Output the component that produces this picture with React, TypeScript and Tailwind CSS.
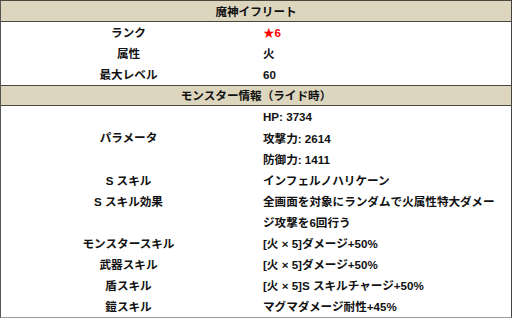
import React from 'react';

type Row = { label: string; value: React.ReactNode };

const basicRows: Row[] = [
    { label: 'ランク', value: <span className="text-[#ff0000]">★6</span> },
    { label: '属性', value: '火' },
    { label: '最大レベル', value: '60' },
];

const skillRows: Row[] = [
    { label: 'モンスタースキル', value: '[火 × 5]ダメージ+50%' },
    { label: '武器スキル', value: '[火 × 5]ダメージ+50%' },
    { label: '盾スキル', value: '[火 × 5]S スキルチャージ+50%' },
    { label: '鎧スキル', value: 'マグマダメージ耐性+45%' },
];

const Header = ({ title, short }: { title: string; short?: boolean }) => (
    <div className={(short ? 'h-[20px] leading-[20px]' : 'h-[21px] leading-[21px]') + ' text-center bg-[#dcd6bf] border-b border-[#4a473d]'}>
        {title}
    </div>
);

const InfoRow = ({ label, value }: Row) => (
    <div className="flex h-[21px] leading-[21px]">
        <div className="w-[255px] text-center">{label}</div>
        <div className="flex-1 pl-[7px]">{value}</div>
    </div>
);

export default function App() {
    return (
        <div
            className="w-[512px] h-[321px] bg-white text-[11.6px] font-bold text-[#111]"
            style={{ fontFamily: '"Liberation Sans", "Noto Sans CJK JP", sans-serif' }}
        >
            <div className="border-t border-[#4a473d] border-l border-l-[#555] border-r border-r-[#444] border-b border-b-[#999]">
                <Header title="魔神イフリート" />
                {basicRows.map(r => <InfoRow key={r.label} {...r} />)}
                <div className="border-t border-[#4a473d]">
                    <Header title="モンスター情報（ライド時）" short />
                </div>
                <div className="flex">
                    <div className="w-[255px] flex items-center justify-center">パラメータ</div>
                    <div className="flex-1 pl-[7px]">
                        <div className="h-[21px] leading-[21px]">HP: 3734</div>
                        <div className="h-[22px] leading-[24px]">攻撃力: 2614</div>
                        <div className="h-[21px] leading-[21px]">防御力: 1411</div>
                    </div>
                </div>
                <InfoRow label="S スキル" value="インフェルノハリケーン" />
                <div className="flex leading-[21px]">
                    <div className="w-[255px] text-center">S スキル効果</div>
                    <div className="flex-1 pl-[7px] pr-[8px]">全画面を対象にランダムで火属性特大ダメージ攻撃を6回行う</div>
                </div>
                {skillRows.map(r => <InfoRow key={r.label} {...r} />)}
            </div>
        </div>
    );
}
